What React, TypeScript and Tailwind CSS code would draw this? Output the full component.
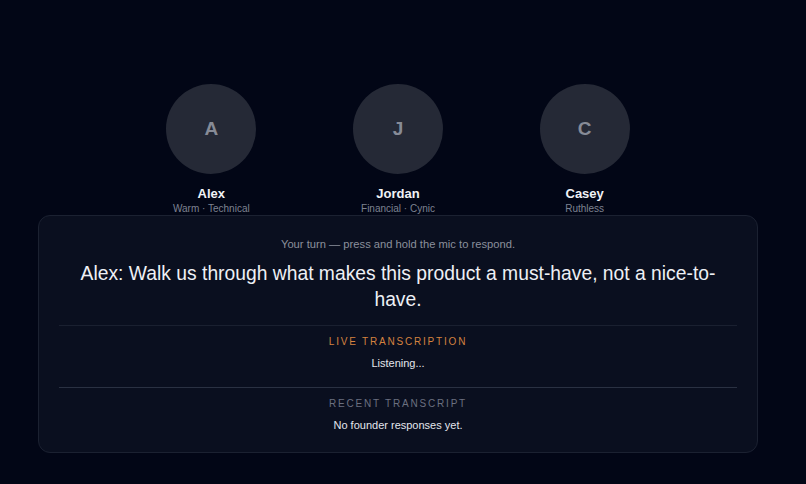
const panelists = [
  { initial: 'A', name: 'Alex', tags: 'Warm · Technical' },
  { initial: 'J', name: 'Jordan', tags: 'Financial · Cynic' },
  { initial: 'C', name: 'Casey', tags: 'Ruthless' },
];

export default function App() {
  return (
    <div
      className="min-h-[484px] w-full bg-[#020616] pt-[84px]"
      style={{ fontFamily: '"Liberation Sans", Arial, sans-serif' }}
    >
      <div className="ml-[38px] w-[720px]">
        {/* panel */}
        <div className="mx-auto grid w-[560px] grid-cols-3">
          {panelists.map((p) => (
            <div key={p.name} className="flex flex-col items-center">
              <div className="flex h-[90px] w-[90px] items-center justify-center rounded-full bg-[#252936]">
                <span className="text-[19px] font-bold text-[#878b97]">{p.initial}</span>
              </div>
              <div className="mt-3 text-[13px] leading-4 font-bold text-[#f1f3f7]">{p.name}</div>
              <div className="text-[10px] leading-[14px] text-[#7d8291]">{p.tags}</div>
            </div>
          ))}
        </div>

        {/* turn card */}
        <div className="-mt-px rounded-xl border border-[#1b2131] bg-[#0a0f1f] px-5 pt-5 pb-[19px] text-center">
          <p className="text-[11.2px] leading-4 text-[#8a8f9c]">
            Your turn — press and hold the mic to respond.
          </p>
          <p className="mt-[9px] text-[19.3px] leading-[26px] text-[#eef0f5]">
            Alex: Walk us through what makes this product a must-have, not a nice-to-have.
          </p>

          <div className="mt-3 h-px bg-[#1a2030]" />

          <div className="pt-[9px] pb-4">
            <p className="text-[10px] leading-[14px] tracking-[0.18em] text-[#d4823f]">LIVE TRANSCRIPTION</p>
            <p className="mt-1.5 text-[11px] leading-4 text-[#e3e6ec]">Listening...</p>
          </div>

          <div className="h-px bg-[#2a3142]" />

          <div className="pt-[9px]">
            <p className="text-[10px] leading-[14px] tracking-[0.18em] text-[#6b7080]">RECENT TRANSCRIPT</p>
            <p className="mt-1.5 text-[11px] leading-4 text-[#e3e6ec]">No founder responses yet.</p>
          </div>
        </div>
      </div>
    </div>
  );
}
